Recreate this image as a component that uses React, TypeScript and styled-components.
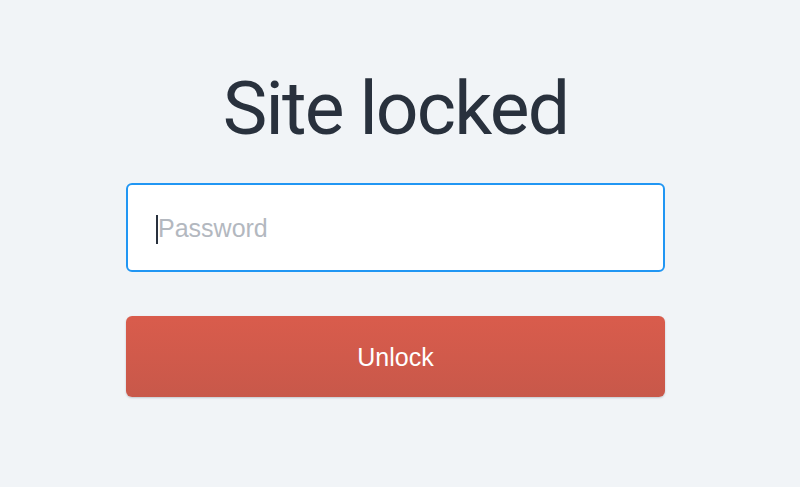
import React from 'react';
import styled, { createGlobalStyle } from 'styled-components';

const GlobalStyle = createGlobalStyle`
  html, body {
    margin: 0;
    padding: 0;
    background: #f1f4f7;
    font-family: 'Liberation Sans', Arial, sans-serif;
  }
`;

const Page = styled.div`
  min-height: 487px;
  padding-top: 61px;
  box-sizing: border-box;
`;

const Column = styled.form`
  width: 539px;
  margin-left: 126px;
  display: flex;
  flex-direction: column;
  align-items: stretch;
`;

const Title = styled.h1`
  margin: 0;
  font-family: Roboto, 'Liberation Sans', sans-serif;
  font-size: 75px;
  line-height: 94px;
  font-weight: 400;
  color: #29313d;
  text-align: center;
  letter-spacing: -1.8px;
`;

const Field = styled.div`
  position: relative;
  margin-top: 28px;
`;

const PasswordInput = styled.input`
  display: block;
  width: 100%;
  height: 89px;
  box-sizing: border-box;
  border: 2px solid #2196f3;
  border-radius: 6px;
  background: #fff;
  padding: 2px 0 0 30px;
  font-family: inherit;
  font-size: 25px;
  color: #29313d;
  outline: none;

  &::placeholder {
    color: #b3b8bf;
  }
`;

const Caret = styled.span`
  position: absolute;
  left: 30px;
  top: 32px;
  width: 2px;
  height: 29px;
  background: #29313d;
`;

const UnlockButton = styled.button`
  margin-top: 44px;
  height: 81px;
  border: none;
  border-radius: 6px;
  background: linear-gradient(to bottom, #d95c4c, #c8584a);
  box-shadow: 0 1px 2px rgba(60, 70, 90, 0.25);
  color: #fff;
  font-family: inherit;
  font-size: 25px;
  font-weight: 400;
  padding-top: 2px;
  cursor: pointer;
`;

export default function App() {
  return (
    <>
      <GlobalStyle />
      <Page>
        <Column onSubmit={(e) => e.preventDefault()}>
          <Title>Site locked</Title>
          <Field>
            <PasswordInput type="password" placeholder="Password" />
            <Caret />
          </Field>
          <UnlockButton type="submit">Unlock</UnlockButton>
        </Column>
      </Page>
    </>
  );
}
